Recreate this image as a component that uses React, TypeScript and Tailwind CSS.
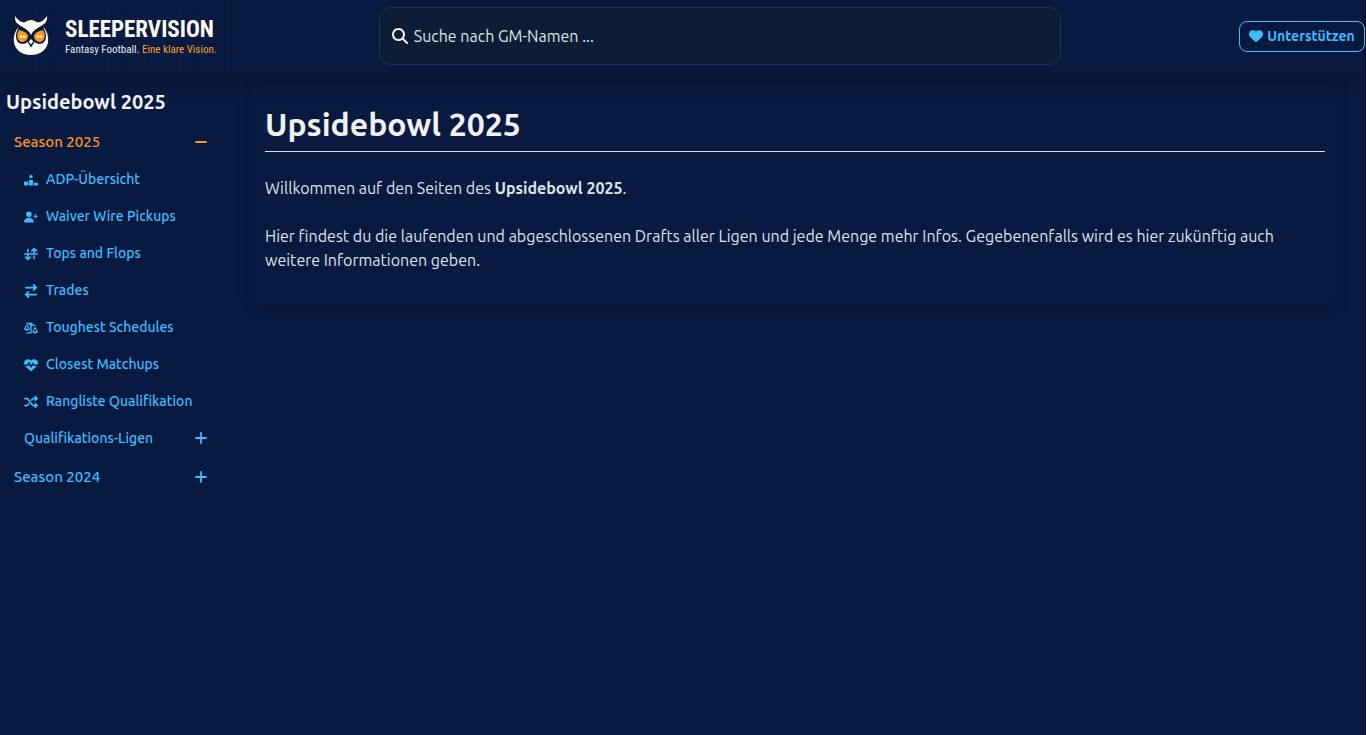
import type { ReactNode } from "react";
import {
  FaArrowDownUpAcrossLine,
  FaArrowRightArrowLeft,
  FaHeart,
  FaHeartPulse,
  FaMagnifyingGlass,
  FaRankingStar,
  FaScaleUnbalancedFlip,
  FaShuffle,
  FaUserPlus,
} from "react-icons/fa6";

function Owl() {
  return (
    <svg viewBox="0 0 36 40" className="h-10 w-9 shrink-0" aria-hidden="true">
      <path
        d="M2 0C1.500 4 3 7.500 7 10C3 13 .8 18 .8 24C.8 33 8.500 39 18 39C27.500 39 35.200 33 35.200 24C35.200 18 33 13 29 10C33 7.500 34.500 4 34 0C31 4.500 28 6 24.500 6.500C20.500 3 15.500 3 11.500 6.500C8 6 5 4.500 2 0Z"
        fill="#fdfbf3"
      />
      <path
        d="M3 6.500C9 11.500 15 12.500 18 19C21 12.500 27 11.500 33 6.500C31 10.500 30 12 31.500 14C34.300 19 33 26 29 27.500C25.500 28.500 22.500 27 21.500 26L18 31.500L14.500 26C13.500 27 10.500 28.500 7 27.500C3 26 1.700 19 4.500 14C6 12 5 10.500 3 6.500Z"
        fill="#081a40"
      />
      <path d="M18 23L20.300 25.500L18 28.500L15.700 25.500Z" fill="#fdfbf3" />
      <path d="M6 14C11 15 14 17 15 19.500C15 23.500 12 26 9 26C5 25.500 3.500 21 4.500 17Z" fill="#ff941f" />
      <path d="M30 14C25 15 22 17 21 19.500C21 23.500 24 26 27 26C31 25.500 32.500 21 31.500 17Z" fill="#ff941f" />
      <path
        d="M6.500 20.500H12.500M8 19V22M11 19V22M23.500 20.500H29.500M25 19V22M28 19V22"
        stroke="#fdfbf3"
        strokeWidth="1"
      />
    </svg>
  );
}

function Toggle({ open }: { open?: boolean }) {
  return (
    <svg viewBox="0 0 12 12" className="size-3 shrink-0" stroke="currentColor" strokeWidth="1.8" strokeLinecap="round" aria-hidden="true">
      <path d="M1 6H11" />
      {!open && <path d="M6 1V11" />}
    </svg>
  );
}

const links: { label: string; icon: ReactNode }[] = [
  { label: "ADP-Übersicht", icon: <FaRankingStar /> },
  { label: "Waiver Wire Pickups", icon: <FaUserPlus /> },
  { label: "Tops and Flops", icon: <FaArrowDownUpAcrossLine /> },
  { label: "Trades", icon: <FaArrowRightArrowLeft /> },
  { label: "Toughest Schedules", icon: <FaScaleUnbalancedFlip /> },
  { label: "Closest Matchups", icon: <FaHeartPulse /> },
  { label: "Rangliste Qualifikation", icon: <FaShuffle /> },
];

export default function App() {
  return (
    <div className="flex min-h-screen flex-col border-r border-black bg-[#081a40] font-['Ubuntu','Noto_Sans',sans-serif] text-[#dee2e6]">
      <header className="relative flex h-[73px] items-center justify-between bg-[#081a40] pb-px shadow-[0_8px_16px_rgba(0,0,0,0.2)]">
        <a
          href="#"
          className="flex h-full w-[225px] items-center gap-4 border-r border-[#05132f] bg-[linear-gradient(#0a1e46_1px,transparent_1px),linear-gradient(90deg,#0a1e46_1px,transparent_1px)] bg-size-[18px_18px] pl-[13px]"
        >
          <Owl />
          <span className="flex flex-col whitespace-nowrap pt-1 font-['Roboto_Condensed','Ubuntu_Condensed','Roboto',sans-serif]">
            <span className="text-[23px] leading-6 font-bold text-[#fdfbf3]">SLEEPERVISION</span>
            <span className="text-[11px] leading-4 text-[#e8ebf2]">
              Fantasy Football. <span className="text-[#ff9f1f]">Eine klare Vision.</span>
            </span>
          </span>
        </a>
        <label className="mr-6 flex h-[58px] w-1/2 items-center gap-1.5 rounded-xl border border-[#22324d] bg-[#0c1e35] px-3">
          <FaMagnifyingGlass className="size-4 text-[#f1f1f1]" />
          <input
            type="text"
            aria-label="Suche nach GM-Namen"
            placeholder="Suche nach GM-Namen ..."
            className="min-w-0 flex-1 bg-transparent text-base placeholder:text-[#dee2e6] focus:outline-none"
          />
        </label>
        <button
          type="button"
          className="flex h-[31px] min-w-[126px] items-center justify-center gap-1 rounded-lg border border-[#3dbdff] px-2 text-sm font-bold text-[#3dbdff]"
        >
          <FaHeart />
          Unterstützen
        </button>
      </header>

      <div className="flex flex-1">
        <nav className="w-[225px] shrink-0 pt-[17px] text-sm font-medium text-[#3dbdff]">
          <h2 className="px-1.5 text-xl leading-6 font-semibold text-[#f1f1f1]">Upsidebowl 2025</h2>
          <button
            type="button"
            aria-expanded="true"
            className="mt-2.5 flex h-9 w-full items-center justify-between pr-[18px] pl-3.5 text-[15px] text-[#ff941f]"
          >
            Season 2025
            <Toggle open />
          </button>
          <ul>
            {links.map(({ label, icon }) => (
              <li key={label}>
                <a href="#" className="flex h-[37px] items-center gap-2 pl-6">
                  <span className="pt-0.5 text-sm">{icon}</span>
                  {label}
                </a>
              </li>
            ))}
          </ul>
          <button type="button" aria-expanded="false" className="flex h-[37px] w-full items-center justify-between pr-[18px] pl-6">
            Qualifikations-Ligen
            <Toggle />
          </button>
          <button
            type="button"
            aria-expanded="false"
            className="mt-[3px] flex h-9 w-full items-center justify-between pr-[18px] pl-3.5 text-[15px]"
          >
            Season 2024
            <Toggle />
          </button>
        </nav>

        <main className="min-w-0 flex-1 pt-3 pr-6 pl-6">
          <section className="rounded-xl bg-[#081a40] px-4 pt-5 pb-8 shadow-[0_2px_12px_rgba(0,0,0,0.2)]">
            <h1 className="border-b border-[#dee2e6] pb-2 text-[32px] leading-[38px] font-semibold text-[#f1f1f1]">Upsidebowl 2025</h1>
            <p className="mt-6 leading-6">
              Willkommen auf den Seiten des <strong className="font-bold">Upsidebowl 2025</strong>.
            </p>
            <p className="mt-6 leading-6">
              Hier findest du die laufenden und abgeschlossenen Drafts aller Ligen und jede Menge mehr Infos. Gegebenenfalls wird es hier
              zukünftig auch weitere Informationen geben.
            </p>
          </section>
        </main>
      </div>
    </div>
  );
}
